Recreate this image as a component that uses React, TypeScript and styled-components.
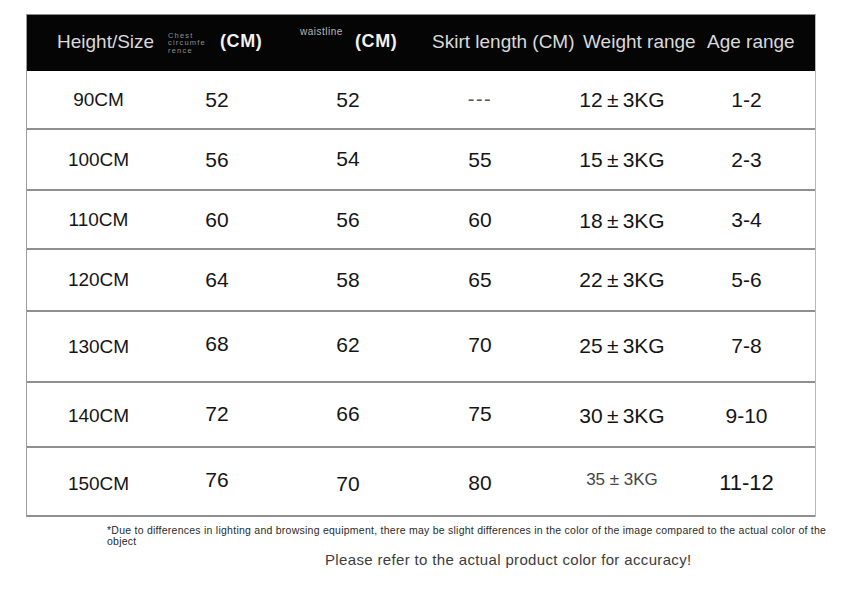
import React from "react";
import styled, { createGlobalStyle } from "styled-components";

const GlobalStyle = createGlobalStyle`
  body {
    margin: 0;
    background: #ffffff;
    font-family: "Liberation Sans", Arial, sans-serif;
  }
`;

const Page = styled.div`
  width: 844px;
  height: 595px;
  padding-top: 14px;
  box-sizing: border-box;
  display: flex;
  flex-direction: column;
  overflow: hidden;
`;

const Table = styled.div`
  width: 790px;
  margin-left: 26px;
  box-sizing: border-box;
  border-top: 1px solid #8d8d8d;
  border-left: 1px solid #9c9c9c;
  border-right: 1px solid #b8b8b8;
`;

const HeaderRow = styled.div`
  height: 56px;
  background: #050505;
  display: grid;
  grid-template-columns: 111px 132px 132px 151px 124px 1fr;
  align-items: center;
  padding: 0 0 3px 30px;
  box-sizing: border-box;
  color: #d9d9d9;
  font-size: 19px;
  white-space: nowrap;
`;

const HeadGroup = styled.div`
  display: flex;
  align-items: center;
`;

const TinyStack = styled.div`
  width: 44px;
  font-size: 7.5px;
  line-height: 7.5px;
  color: #8e8e8e;
  letter-spacing: 1.2px;
  margin-right: 8px;
  padding-top: 3px;
  overflow: hidden;
`;

const TinySup = styled.span`
  width: 46px;
  font-size: 10px;
  letter-spacing: 0.5px;
  color: #b5b5b5;
  align-self: flex-start;
  margin-top: -5px;
  margin-right: 9px;
`;

const CmBold = styled.span`
  font-weight: 700;
  font-size: 18px;
  letter-spacing: 0.6px;
  color: #f2f2f2;
`;

const Row = styled.div<{ $h: number }>`
  height: ${(p) => p.$h}px;
  box-sizing: border-box;
  border-bottom: 2px solid #8f8f8f;
  display: grid;
  grid-template-columns: 143px 94px 168px 96px 188px 1fr;
  align-items: center;
  justify-items: center;
  color: #151515;

  & > *:last-child {
    padding-right: 38px;
  }
`;

const Cell = styled.span<{ $size?: number; $lift?: number; $muted?: boolean }>`
  font-size: ${(p) => p.$size ?? 21}px;
  padding-bottom: ${(p) => Math.max(0, (p.$lift ?? 0) * 2)}px;
  padding-top: ${(p) => Math.max(0, -(p.$lift ?? 0) * 2)}px;
  color: ${(p) => (p.$muted ? "#444" : "inherit")};
  white-space: nowrap;
`;

const Dashes = styled.span`
  font-size: 20px;
  letter-spacing: 1.5px;
  color: #5a5a5a;
`;

const Note = styled.div`
  margin: 8px 0 0 107px;
  font-size: 10.5px;
  line-height: 11px;
  letter-spacing: 0.25px;
  color: #2a2a2a;
  white-space: nowrap;
`;

const Remark = styled.div`
  margin: 4px 0 0 325px;
  font-size: 15px;
  letter-spacing: 0.35px;
  color: #3c3c3c;
`;

type CellData = { t: string; size?: number; lift?: number; muted?: boolean };

const pm = (a: string, b: string) => `${a}\u2009±\u2009${b}`;

const rows: { h: number; cells: CellData[] }[] = [
  {
    h: 59,
    cells: [
      { t: "90CM", size: 19 },
      { t: "52" },
      { t: "52" },
      { t: "---" },
      { t: pm("12", "3KG") },
      { t: "1-2" },
    ],
  },
  {
    h: 61,
    cells: [
      { t: "100CM", size: 19 },
      { t: "56" },
      { t: "54", lift: 1 },
      { t: "55" },
      { t: pm("15", "3KG") },
      { t: "2-3" },
    ],
  },
  {
    h: 59,
    cells: [
      { t: "110CM", size: 19 },
      { t: "60" },
      { t: "56" },
      { t: "60" },
      { t: pm("18", "3KG"), lift: -1 },
      { t: "3-4" },
    ],
  },
  {
    h: 62,
    cells: [
      { t: "120CM", size: 19 },
      { t: "64" },
      { t: "58" },
      { t: "65" },
      { t: pm("22", "3KG") },
      { t: "5-6" },
    ],
  },
  {
    h: 71,
    cells: [
      { t: "130CM", size: 19 },
      { t: "68", lift: 3 },
      { t: "62", lift: 2 },
      { t: "70", lift: 2 },
      { t: pm("25", "3KG"), lift: 1 },
      { t: "7-8", lift: 1 },
    ],
  },
  {
    h: 65,
    cells: [
      { t: "140CM", size: 19, lift: -1 },
      { t: "72", lift: 1 },
      { t: "66", lift: 1 },
      { t: "75", lift: 1 },
      { t: pm("30", "3KG"), lift: -1 },
      { t: "9-10", lift: -1 },
    ],
  },
  {
    h: 69,
    cells: [
      { t: "150CM", size: 19, lift: -2 },
      { t: "76", lift: 2 },
      { t: "70", lift: -2 },
      { t: "80", lift: -1 },
      { t: "35 ± 3KG", size: 17, lift: 2, muted: true },
      { t: "11-12", size: 22, lift: -1 },
    ],
  },
];

export default function App() {
  return (
    <Page>
      <GlobalStyle />
      <Table>
        <HeaderRow>
          <span>Height/Size</span>
          <HeadGroup>
            <TinyStack>
              Chest
              <br />
              circumfe
              <br />
              rence
            </TinyStack>
            <CmBold>(CM)</CmBold>
          </HeadGroup>
          <HeadGroup>
            <TinySup>waistline</TinySup>
            <CmBold>(CM)</CmBold>
          </HeadGroup>
          <span>Skirt length (CM)</span>
          <span>Weight range</span>
          <span>Age range</span>
        </HeaderRow>
        {rows.map((row, i) => (
          <Row key={i} $h={row.h}>
            {row.cells.map((c, j) =>
              c.t === "---" ? (
                <Dashes key={j}>---</Dashes>
              ) : (
                <Cell key={j} $size={c.size} $lift={c.lift} $muted={c.muted}>
                  {c.t}
                </Cell>
              ),
            )}
          </Row>
        ))}
      </Table>
      <Note>
        *Due to differences in lighting and browsing equipment, there may be
        slight differences in the color of the image compared to the actual
        color of the
        <br />
        object
      </Note>
      <Remark>Please refer to the actual product color for accuracy!</Remark>
    </Page>
  );
}
